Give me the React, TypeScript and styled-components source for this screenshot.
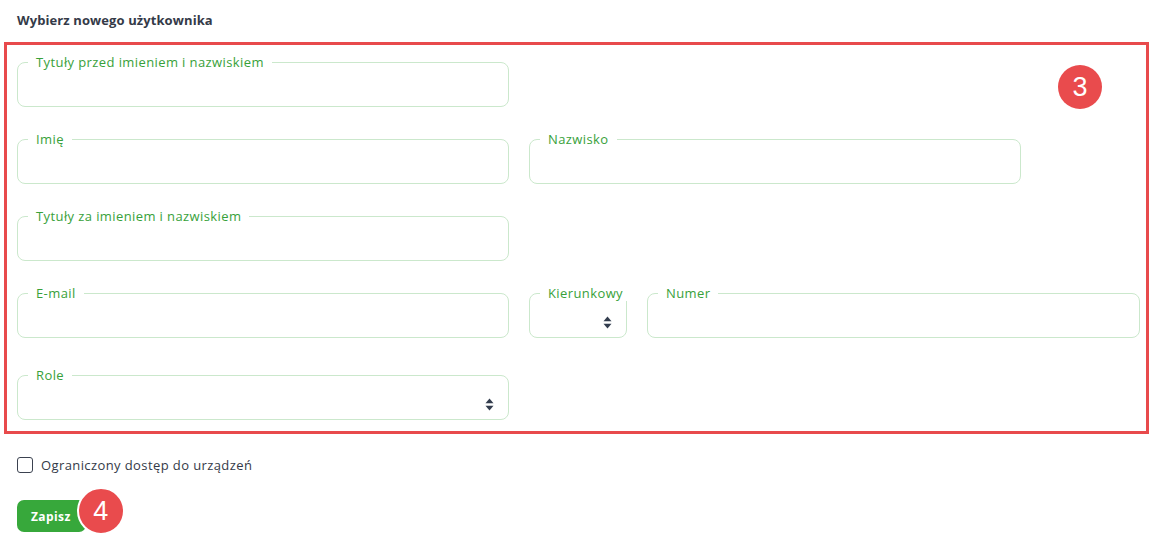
import styled, { createGlobalStyle } from "styled-components";

const GlobalStyle = createGlobalStyle`
  body {
    margin: 0;
    background: #ffffff;
    font-family: "Open Sans", "DejaVu Sans", sans-serif;
  }
`;

const Page = styled.div`
  width: 1153px;
  height: 548px;
  box-sizing: border-box;
  padding-top: 12px;
`;

const Title = styled.div`
  padding-left: 17px;
  font-size: 13px;
  font-weight: 700;
  line-height: 16px;
  letter-spacing: 0.1px;
  color: #343a48;
`;

const Frame = styled.div`
  position: relative;
  margin: 14px 4px 0;
  border: 3px solid #e84a4c;
  padding: 9px 6px 11px 10px;
  display: flex;
  flex-direction: column;
`;

const Row = styled.div<{ $top?: number }>`
  display: flex;
  gap: 20px;
  margin-top: ${(p) => p.$top ?? 0}px;
`;

const Field = styled.fieldset<{ $width?: number }>`
  margin: 0;
  padding: 0 10px;
  border: 1px solid #cbe8cc;
  border-radius: 8px;
  box-sizing: border-box;
  min-width: 0;
  height: 53px;
  position: relative;
  ${(p) => (p.$width ? `width: ${p.$width}px; flex: none;` : "flex: 1;")}
`;

const Legend = styled.legend`
  padding: 0 8px;
  font-size: 13px;
  line-height: 16px;
  letter-spacing: 0.4px;
  color: #38a13a;
`;

const Input = styled.input`
  display: block;
  width: 100%;
  height: 34px;
  border: none;
  outline: none;
  background: transparent;
  font: inherit;
`;

const SortIcon = styled.svg`
  position: absolute;
  right: 14px;
  top: 15px;
`;

const Badge = styled.div<{ $ring?: boolean }>`
  width: 44px;
  height: 44px;
  border-radius: 50%;
  background: #e94b4d;
  color: #ffffff;
  display: flex;
  align-items: center;
  justify-content: center;
  font-size: 27px;
  font-family: "Liberation Sans", Arial, sans-serif;
  box-sizing: content-box;
  ${(p) => (p.$ring ? "border: 2px solid #ffffff;" : "")}
`;

const FrameBadge = styled(Badge)`
  position: absolute;
  right: 44px;
  top: 20px;
`;

const CheckRow = styled.label`
  display: flex;
  align-items: center;
  gap: 8px;
  margin: 22px 0 0 17px;
  font-size: 13px;
  letter-spacing: 0.4px;
  color: #343a48;
`;

const Check = styled.span`
  width: 16px;
  height: 16px;
  box-sizing: border-box;
  border: 1.5px solid #3b4250;
  border-radius: 3px;
`;

const Actions = styled.div`
  display: flex;
  align-items: center;
  margin: 13px 0 0 17px;
`;

const SaveButton = styled.button`
  height: 32px;
  padding: 0 15px 0 14px;
  border: none;
  border-radius: 7px;
  background: #37a83b;
  color: #ffffff;
  font-family: inherit;
  font-size: 12px;
  font-weight: 700;
  letter-spacing: 0.4px;
  margin-top: 10px;
`;

const ButtonBadge = styled(Badge)`
  margin-left: -9px;
`;

function Sort() {
  return (
    <SortIcon width="9" height="13" viewBox="0 0 9 13">
      <path d="M4.5 0.5 L8.5 5.2 H0.5 Z" fill="#333d4e" />
      <path d="M4.5 12.5 L8.5 7.8 H0.5 Z" fill="#333d4e" />
    </SortIcon>
  );
}

type FieldProps = {
  label: string;
  width?: number;
  select?: boolean;
};

function FormField({ label, width, select }: FieldProps) {
  return (
    <Field $width={width}>
      <Legend>{label}</Legend>
      <Input aria-label={label} />
      {select && <Sort />}
    </Field>
  );
}

export default function App() {
  return (
    <Page>
      <GlobalStyle />
      <Title>Wybierz nowego użytkownika</Title>
      <Frame>
        <Row>
          <FormField label="Tytuły przed imieniem i nazwiskiem" width={492} />
        </Row>
        <Row $top={24}>
          <FormField label="Imię" width={492} />
          <FormField label="Nazwisko" width={492} />
        </Row>
        <Row $top={24}>
          <FormField label="Tytuły za imieniem i nazwiskiem" width={492} />
        </Row>
        <Row $top={24}>
          <FormField label="E-mail" width={492} />
          <FormField label="Kierunkowy" width={98} select />
          <FormField label="Numer" />
        </Row>
        <Row $top={29}>
          <FormField label="Role" width={492} select />
        </Row>
        <FrameBadge>3</FrameBadge>
      </Frame>
      <CheckRow>
        <Check />
        Ograniczony dostęp do urządzeń
      </CheckRow>
      <Actions>
        <SaveButton>Zapisz</SaveButton>
        <ButtonBadge $ring>4</ButtonBadge>
      </Actions>
    </Page>
  );
}
